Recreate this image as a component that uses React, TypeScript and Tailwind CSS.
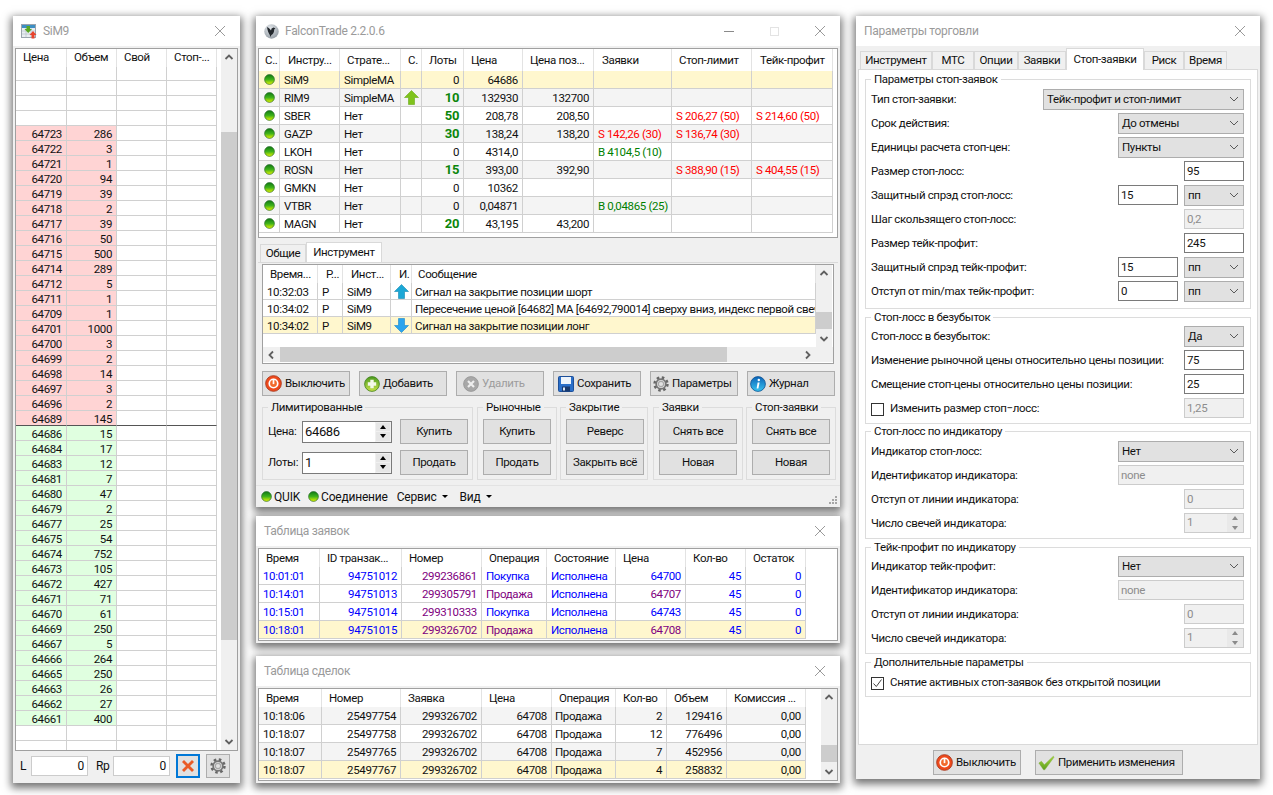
import type { ReactNode } from "react";

const asks: [string, string][] = [
  ["64723", "286"], ["64722", "3"], ["64721", "1"], ["64720", "94"], ["64719", "39"],
  ["64718", "2"], ["64717", "39"], ["64716", "50"], ["64715", "500"], ["64714", "289"],
  ["64712", "5"], ["64711", "1"], ["64709", "1"], ["64701", "1000"], ["64700", "3"],
  ["64699", "2"], ["64698", "14"], ["64697", "3"], ["64696", "2"], ["64689", "145"],
];
const bids: [string, string][] = [
  ["64686", "15"], ["64684", "17"], ["64683", "12"], ["64681", "7"], ["64680", "47"],
  ["64679", "2"], ["64677", "25"], ["64675", "54"], ["64674", "752"], ["64673", "105"],
  ["64672", "427"], ["64671", "71"], ["64670", "61"], ["64669", "250"], ["64667", "5"],
  ["64666", "264"], ["64665", "250"], ["64663", "26"], ["64662", "27"], ["64661", "400"],
];

const instruments = [
  { n: "SiM9", s: "SimpleMA", lots: "0", p: "64686", pos: "", o: "", sl: "", tp: "", bg: "bg-[#fff7ce]" },
  { n: "RIM9", s: "SimpleMA", arrow: true, lots: "10", p: "132930", pos: "132700", o: "", sl: "", tp: "", bg: "bg-[#f4f4f4]" },
  { n: "SBER", s: "Нет", lots: "50", p: "208,78", pos: "208,50", o: "", sl: "S 206,27 (50)", tp: "S 214,60 (50)", bg: "bg-white" },
  { n: "GAZP", s: "Нет", lots: "30", p: "138,24", pos: "138,20", o: "S 142,26 (30)", sl: "S 136,74 (30)", tp: "", bg: "bg-[#f4f4f4]" },
  { n: "LKOH", s: "Нет", lots: "0", p: "4314,0", pos: "", o: "B 4104,5 (10)", sl: "", tp: "", bg: "bg-white" },
  { n: "ROSN", s: "Нет", lots: "15", p: "393,00", pos: "392,90", o: "", sl: "S 388,90 (15)", tp: "S 404,55 (15)", bg: "bg-[#f4f4f4]" },
  { n: "GMKN", s: "Нет", lots: "0", p: "10362", pos: "", o: "", sl: "", tp: "", bg: "bg-white" },
  { n: "VTBR", s: "Нет", lots: "0", p: "0,04871", pos: "", o: "B 0,04865 (25)", sl: "", tp: "", bg: "bg-[#f4f4f4]" },
  { n: "MAGN", s: "Нет", lots: "20", p: "43,195", pos: "43,200", o: "", sl: "", tp: "", bg: "bg-white" },
];

const orders = [
  { t: "10:01:01", id: "94751012", num: "299236861", op: "Покупка", price: "64700", bg: "bg-white" },
  { t: "10:14:01", id: "94751013", num: "299305791", op: "Продажа", price: "64707", bg: "bg-white" },
  { t: "10:15:01", id: "94751014", num: "299310333", op: "Покупка", price: "64743", bg: "bg-white" },
  { t: "10:18:01", id: "94751015", num: "299326702", op: "Продажа", price: "64708", bg: "bg-[#fff7ce]" },
];

const deals = [
  { t: "10:18:06", num: "25497754", q: "2", v: "129416", bg: "bg-[#f4f4f4]" },
  { t: "10:18:07", num: "25497758", q: "12", v: "776496", bg: "bg-white" },
  { t: "10:18:07", num: "25497765", q: "7", v: "452956", bg: "bg-[#f4f4f4]" },
  { t: "10:18:07", num: "25497767", q: "4", v: "258832", bg: "bg-[#fff7ce]" },
];

const DOM_COLS = "grid-cols-[51px_50px_50px_50px]";
const INSTR_COLS = "grid-cols-[21px_60px_61px_21px_42px_59px_71px_78px_80px_81px]";
const LOG_COLS = "grid-cols-[55px_25px_48px_21px_404px]";
const ORDER_COLS = "grid-cols-[61px_82px_80px_65px_69px_70px_60px_60px]";
const DEAL_COLS = "grid-cols-[63px_79px_81px_70px_64px_51px_60px_79px]";

function Cell({ right, className = "", children }: { right?: boolean; className?: string; children?: ReactNode }) {
  return (
    <div
      className={`flex items-center overflow-hidden whitespace-nowrap border-r border-b border-[#d0d0d0] pt-[3px] ${
        right ? "justify-end pr-[4px]" : "pl-[4px]"
      } ${className}`}
    >
      {children}
    </div>
  );
}

function Head({ className = "pl-[7px]", children }: { className?: string; children?: ReactNode }) {
  return (
    <div className={`flex items-center overflow-hidden whitespace-nowrap border-r border-[#e3e3e3] pt-[2px] ${className}`}>
      {children}
    </div>
  );
}

function Chevron({ dir }: { dir: "up" | "down" | "left" | "right" }) {
  const d = {
    up: "M1.5 6 L5 2.5 L8.5 6",
    down: "M1.5 3 L5 6.5 L8.5 3",
    left: "M6 1.5 L2.5 5 L6 8.5",
    right: "M3 1.5 L6.5 5 L3 8.5",
  }[dir];
  return (
    <svg width="10" height="10" viewBox="0 0 10 10" fill="none">
      <path d={d} stroke="#606060" strokeWidth="1.8" />
    </svg>
  );
}

function VScroll({ thumb }: { thumb: string }) {
  return (
    <div className="flex w-[16px] shrink-0 flex-col bg-[#f0f0f0]">
      <div className="flex h-[17px] shrink-0 items-center justify-center">
        <Chevron dir="up" />
      </div>
      <div className={`shrink-0 bg-[#cdcdcd] ${thumb}`} />
      <div className="mt-auto flex h-[17px] shrink-0 items-center justify-center">
        <Chevron dir="down" />
      </div>
    </div>
  );
}

function Cross() {
  return (
    <svg width="10" height="10" viewBox="0 0 10 10" fill="none">
      <path d="M0 0 L10 10 M10 0 L0 10" stroke="#9a9a9a" strokeWidth="1" />
    </svg>
  );
}

function Led() {
  return (
    <svg width="11" height="11" viewBox="0 0 13 13" className="shrink-0">
      <defs>
        <linearGradient id="led" x1="0" y1="0" x2="0" y2="1">
          <stop offset="0" stopColor="#0f7a14" />
          <stop offset="0.5" stopColor="#3fb21a" />
          <stop offset="1" stopColor="#e6f600" />
        </linearGradient>
      </defs>
      <circle cx="6.5" cy="6.5" r="5.8" fill="url(#led)" stroke="#2b6b2b" strokeWidth="0.8" />
    </svg>
  );
}

function BigArrow({ color, dark, down }: { color: string; dark: string; down?: boolean }) {
  return (
    <svg width="15" height="15" viewBox="0 0 15 15" className={down ? "rotate-180" : ""}>
      <path d="M7.5 0.5 L14.5 7.5 H10.5 V14.5 H4.5 V7.5 H0.5 Z" fill={color} stroke={dark} strokeWidth="0.6" />
    </svg>
  );
}

function PowerIcon() {
  return (
    <svg width="17" height="17" viewBox="0 0 16 16" className="shrink-0">
      <circle cx="8" cy="8" r="7.4" fill="#ee4a1c" stroke="#a8341a" strokeWidth="0.8" />
      <circle cx="8" cy="8" r="4" fill="#f26a2c" stroke="#fff" strokeWidth="1.6" />
      <rect x="7.2" y="3.6" width="1.6" height="5" fill="#fff" />
    </svg>
  );
}

function PlusIcon() {
  return (
    <svg width="16" height="16" viewBox="0 0 16 16" className="shrink-0">
      <defs>
        <linearGradient id="plus" x1="0" y1="0" x2="0" y2="1">
          <stop offset="0" stopColor="#4a9a1e" />
          <stop offset="1" stopColor="#c8e24a" />
        </linearGradient>
      </defs>
      <circle cx="8" cy="8" r="7.4" fill="url(#plus)" stroke="#3f7f1c" strokeWidth="0.8" />
      <path d="M6.3 3.8 H9.7 V6.3 H12.2 V9.7 H9.7 V12.2 H6.3 V9.7 H3.8 V6.3 H6.3 Z" fill="#f4f8ea" />
    </svg>
  );
}

function DeleteIcon() {
  return (
    <svg width="16" height="16" viewBox="0 0 16 16" className="shrink-0">
      <circle cx="8" cy="8" r="7.4" fill="#a8a8a8" stroke="#949494" strokeWidth="0.8" />
      <path d="M5 5 L11 11 M11 5 L5 11" stroke="#eee" strokeWidth="2.2" />
    </svg>
  );
}

function FloppyIcon() {
  return (
    <svg width="16" height="16" viewBox="0 0 16 16" className="shrink-0">
      <rect x="0.5" y="0.5" width="15" height="15" rx="1" fill="#2a6fc9" stroke="#1d4f99" />
      <rect x="3" y="1" width="10" height="7" fill="#eef4fb" />
      <rect x="4" y="10.5" width="8" height="5" fill="#17396e" />
      <rect x="5" y="11.5" width="2" height="3" fill="#dbe6f5" />
    </svg>
  );
}

function GearIcon({ size = 16 }: { size?: number }) {
  return (
    <svg width={size} height={size} viewBox="0 0 16 16" fill="none" className="shrink-0">
      <circle cx="8" cy="8" r="6.4" stroke="#666666" strokeWidth="2.6" strokeDasharray="2.5 2.53" />
      <circle cx="8" cy="8" r="4.8" stroke="#757575" strokeWidth="1.8" />
      <circle cx="8" cy="8" r="2.6" stroke="#a8a8a8" strokeWidth="1.1" />
    </svg>
  );
}

function InfoIcon() {
  return (
    <svg width="16" height="16" viewBox="0 0 16 16" className="shrink-0">
      <defs>
        <linearGradient id="info" x1="0" y1="0" x2="0" y2="1">
          <stop offset="0" stopColor="#0c64b8" />
          <stop offset="1" stopColor="#38c4f0" />
        </linearGradient>
      </defs>
      <circle cx="8" cy="8" r="7.4" fill="url(#info)" stroke="#0d4f90" strokeWidth="0.8" />
      <circle cx="8.8" cy="4" r="1.2" fill="#fff" />
      <path d="M7.6 6.4 H9.6 L8.4 12.4 H6.6 Z" fill="#fff" />
    </svg>
  );
}

function CheckIcon() {
  return (
    <svg width="17" height="16" viewBox="0 0 20 18" className="shrink-0">
      <defs>
        <linearGradient id="chk" x1="0" y1="0" x2="0" y2="1">
          <stop offset="0" stopColor="#a4d83c" />
          <stop offset="1" stopColor="#5e9e1e" />
        </linearGradient>
      </defs>
      <path d="M1 9 L4 7 L7.5 11 L18 1 L19 2 L8 17 L6.5 17 Z" fill="url(#chk)" stroke="#7faa3a" strokeWidth="0.5" />
    </svg>
  );
}

function DomIcon() {
  return (
    <svg width="16" height="16" viewBox="0 0 16 16">
      <rect x="0.5" y="1.5" width="14" height="13" fill="#e9eef2" stroke="#9aa4ad" />
      <rect x="1" y="2" width="13" height="3" fill="#3d8fc4" />
      <path d="M1 8 H14 M1 11 H14 M5 5 V14 M10 5 V14" stroke="#b7c0c8" strokeWidth="0.7" />
      <path d="M5.5 3 H9 V6 H11 L7.2 10 L3.5 6 H5.5 Z" fill="#58a821" />
      <path d="M12 8 L15.5 12 H13.5 V15.5 H10.5 V12 H8.5 Z" fill="#e8432c" />
    </svg>
  );
}

function FalconIcon() {
  return (
    <svg width="15" height="15" viewBox="0 0 15 15">
      <defs>
        <radialGradient id="fal" cx="0.4" cy="0.3" r="0.8">
          <stop offset="0" stopColor="#e4e8ec" />
          <stop offset="1" stopColor="#8d969e" />
        </radialGradient>
      </defs>
      <circle cx="7.5" cy="7.5" r="7.2" fill="url(#fal)" />
      <path d="M3 3 C5 4 6 5 7 6.4 L7.6 4.4 L9.6 3.6 L11.4 4.6 L10.2 5.4 C10.4 8 9 10 7.4 11 L6.4 13 L5.8 11 C4.4 9 3.4 6 3 3 Z" fill="#23282d" />
    </svg>
  );
}

function Win({ pos, title, icon, controls, children }: { pos: string; title: string; icon?: ReactNode; controls?: boolean; children: ReactNode }) {
  return (
    <div className={`absolute flex flex-col bg-[#f0f0f0] shadow-[0_3px_8px_2px_rgba(0,0,0,0.55)] ${pos}`}>
      <div className="flex h-[30px] shrink-0 items-center bg-white pl-[8px] pr-[15px] text-[12px] tracking-[-0.3px] text-[#9a9a9a]">
        {icon && <span className="mr-[6px] flex">{icon}</span>}
        <span>{title}</span>
        <div className="ml-auto flex items-center gap-[36px]">
          {controls && (
            <>
              <span className="h-px w-[10px] bg-[#8a8a8a]" />
              <span className="h-[9px] w-[9px] border border-[#e3e3e3]" />
            </>
          )}
          <Cross />
        </div>
      </div>
      {children}
    </div>
  );
}

function Btn({ w = "w-[88px]", h = "h-[25px]", pad, icon, disabled, children }: { w?: string; h?: string; pad?: string; icon?: ReactNode; disabled?: boolean; children?: ReactNode }) {
  return (
    <div
      className={`flex shrink-0 items-center gap-[3px] border border-[#adadad] bg-[#e1e1e1] ${
        pad ? `justify-start ${pad}` : "justify-center"
      } ${w} ${h} ${disabled ? "text-[#9d9d9d]" : ""}`}
    >
      {icon}
      {children}
    </div>
  );
}

function Group({ title, className, body = "", children }: { title: string; className: string; body?: string; children: ReactNode }) {
  return (
    <fieldset className={`min-w-0 border border-[#dcdcdc] ${className}`}>
      <legend className="ml-[5px] px-[3px] leading-[14px]">{title}</legend>
      <div className={body}>{children}</div>
    </fieldset>
  );
}

function Spin({ value }: { value: string }) {
  return (
    <div className="flex h-[22px] w-[90px] items-center border border-[#7a7a7a] bg-white pl-[2px] text-[13px]">
      <span>{value}</span>
      <div className="ml-auto flex h-full w-[16px] flex-col justify-center gap-[1px] bg-[#f0f0f0] px-[1px] py-[1px]">
        <div className="flex flex-1 items-center justify-center bg-[#e6e6e6]">
          <span className="h-0 w-0 border-x-[3px] border-b-[4px] border-x-transparent border-b-black" />
        </div>
        <div className="flex flex-1 items-center justify-center bg-[#e6e6e6]">
          <span className="h-0 w-0 border-x-[3px] border-t-[4px] border-x-transparent border-t-black" />
        </div>
      </div>
    </div>
  );
}

function Combo({ w, children }: { w: string; children: ReactNode }) {
  return (
    <div className={`flex h-[21px] items-center justify-between border border-[#adadad] bg-[#e1e1e1] pl-[3px] pr-[4px] ${w}`}>
      <span className="pt-px">{children}</span>
      <svg width="10" height="6" viewBox="0 0 10 6" fill="none">
        <path d="M1 1 L5 5 L9 1" stroke="#5a5a5a" strokeWidth="1" />
      </svg>
    </div>
  );
}

function Field({ w = "w-[60px]", disabled, children }: { w?: string; disabled?: boolean; children: ReactNode }) {
  return (
    <div
      className={`flex h-[20px] items-center border pl-[2px] pt-px ${w} ${
        disabled ? "border-[#cccccc] bg-[#f0f0f0] text-[#8d8d8d]" : "border-[#7a7a7a] bg-white"
      }`}
    >
      {children}
    </div>
  );
}

function Row({ label, children }: { label: ReactNode; children?: ReactNode }) {
  return (
    <div className="flex h-[24px] items-center justify-between">
      <div className="flex items-center whitespace-nowrap pt-[2px]">{label}</div>
      <div className="flex items-center gap-[6px]">{children}</div>
    </div>
  );
}

function DisabledSpin() {
  return (
    <div className="flex h-[20px] w-[60px] items-center border border-[#cccccc] bg-[#f0f0f0] pl-[2px] text-[#8d8d8d]">
      <span>1</span>
      <div className="ml-auto flex h-full w-[16px] flex-col justify-center gap-[1px] bg-[#e9e9e9]">
        <div className="flex flex-1 items-center justify-center">
          <span className="h-0 w-0 border-x-[3px] border-b-[4px] border-x-transparent border-b-[#8a8a8a]" />
        </div>
        <div className="flex flex-1 items-center justify-center">
          <span className="h-0 w-0 border-x-[3px] border-t-[4px] border-x-transparent border-t-[#8a8a8a]" />
        </div>
      </div>
    </div>
  );
}

function Box({ checked }: { checked?: boolean }) {
  return (
    <span className="mr-[6px] flex h-[13px] w-[13px] items-center justify-center border border-[#333333] bg-white">
      {checked && (
        <svg width="11" height="11" viewBox="0 0 11 11" fill="none">
          <path d="M1.5 5.5 L4.3 8.5 L9.5 1.5" stroke="#444" strokeWidth="1" />
        </svg>
      )}
    </span>
  );
}

function DomWindow() {
  return (
    <Win pos="left-[13px] top-[16px] h-[767px] w-[227px]" title="SiM9" icon={<DomIcon />}>
      <div className="mx-[2px] mt-[2px] flex h-[703px] overflow-hidden border border-[#a0a0a0] bg-white">
        <div className="w-[205px] shrink-0 overflow-hidden">
          <div className={`grid h-[18px] ${DOM_COLS}`}>
            <Head className="pl-[7px] !pt-0">Цена</Head>
            <Head className="pl-[7px] !pt-0">Объем</Head>
            <Head className="pl-[7px] !pt-0">Свой</Head>
            <Head className="pl-[7px] !pt-0">Стоп-...</Head>
          </div>
          {["h-[14px]", "h-[15px]", "h-[15px]", "h-[15px]"].map((h, i) => (
            <div key={i} className={`grid ${DOM_COLS} ${h}`}>
              <Cell /><Cell /><Cell /><Cell />
            </div>
          ))}
          {asks.map(([p, v], i) => (
            <div key={p} className={`grid h-[15px] ${DOM_COLS}`}>
              <Cell right className={`bg-[#ffd4d4] !pt-[4px] ${i === 19 ? "border-b-[#555555]" : ""}`}>{p}</Cell>
              <Cell right className={`bg-[#ffd4d4] !pt-[4px] ${i === 19 ? "border-b-[#555555]" : ""}`}>{v}</Cell>
              <Cell className={i === 19 ? "border-b-[#555555]" : ""} />
              <Cell className={i === 19 ? "border-b-[#555555]" : ""} />
            </div>
          ))}
          {bids.map(([p, v]) => (
            <div key={p} className={`grid h-[15px] ${DOM_COLS}`}>
              <Cell right className="bg-[#e0ffe0] !pt-[4px]">{p}</Cell>
              <Cell right className="bg-[#e0ffe0] !pt-[4px]">{v}</Cell>
              <Cell />
              <Cell />
            </div>
          ))}
          {[0, 1].map((i) => (
            <div key={i} className={`grid h-[15px] ${DOM_COLS}`}>
              <Cell /><Cell /><Cell /><Cell />
            </div>
          ))}
        </div>
        <VScroll thumb="mt-[66px] h-[508px]" />
      </div>
      <div className="mt-[3px] flex items-center pl-[7px] text-[12px]">
        <span className="w-[11px]">L</span>
        <div className="flex h-[20px] w-[57px] items-center justify-end border border-[#cccccc] bg-white pr-[3px]">0</div>
        <span className="ml-[8px] w-[17px]">Rp</span>
        <div className="flex h-[20px] w-[57px] items-center justify-end border border-[#cccccc] bg-white pr-[3px]">0</div>
        <div className="ml-[6px] flex h-[24px] w-[24px] items-center justify-center border-2 border-[#0078d7] bg-[#e1e1e1]">
          <svg width="14" height="14" viewBox="0 0 14 14">
            <path d="M1 3 L3 1 L7 5 L11 1 L13 3 L9 7 L13 11 L11 13 L7 9 L3 13 L1 11 L5 7 Z" fill="#ea5b26" />
          </svg>
        </div>
        <div className="ml-[6px] flex h-[24px] w-[24px] items-center justify-center border border-[#adadad] bg-[#e1e1e1]">
          <GearIcon />
        </div>
      </div>
    </Win>
  );
}

function MainWindow() {
  return (
    <Win pos="left-[256px] top-[16px] h-[491px] w-[584px]" title="FalconTrade 2.2.0.6" icon={<FalconIcon />} controls>
      <div className="mx-[2px] mt-[2px] flex h-[190px] shrink-0 flex-col overflow-hidden border border-[#a0a0a0] bg-white">
        <div className={`grid h-[22px] shrink-0 ${INSTR_COLS}`}>
          <Head className="pl-[6px]">С..</Head>
          <Head className="pl-[8px]">Инстру...</Head>
          <Head>Страте...</Head>
          <Head>С.</Head>
          <Head>Лоты</Head>
          <Head>Цена</Head>
          <Head>Цена поз...</Head>
          <Head className="pl-[8px]">Заявки</Head>
          <Head>Стоп-лимит</Head>
          <Head className="pl-[8px]">Тейк-профит</Head>
        </div>
        {instruments.map((r) => (
          <div key={r.n} className={`grid h-[18px] shrink-0 ${INSTR_COLS}`}>
            <Cell className={`justify-center !pl-0 !pt-0 ${r.bg}`}><Led /></Cell>
            <Cell className={r.bg}>{r.n}</Cell>
            <Cell className={r.bg}>{r.s}</Cell>
            <Cell className={`justify-center !pl-0 !pt-0 ${r.bg}`}>
              {r.arrow && <BigArrow color="#7fc31c" dark="#6aa818" />}
            </Cell>
            <Cell right className={`${r.bg} ${r.lots !== "0" ? "!pt-0 text-[13px] font-bold text-[#0b860b]" : ""}`}>{r.lots}</Cell>
            <Cell right className={r.bg}>{r.p}</Cell>
            <Cell right className={r.bg}>{r.pos}</Cell>
            <Cell className={`${r.bg} ${r.o.startsWith("B") ? "text-[#008000]" : "text-[#ff0000]"}`}>{r.o}</Cell>
            <Cell className={`${r.bg} text-[#ff0000]`}>{r.sl}</Cell>
            <Cell className={`${r.bg} text-[#ff0000]`}>{r.tp}</Cell>
          </div>
        ))}
      </div>

      <div className="ml-[4px] mt-[4px] flex h-[20px] shrink-0 items-end">
        <div className="flex h-[18px] w-[46px] items-center justify-center border border-b-0 border-[#d9d9d9]">Общие</div>
        <div className="flex h-[20px] w-[76px] items-center justify-center border border-b-0 border-[#d9d9d9] bg-white">Инструмент</div>
      </div>
      <div className="mx-[2px] border-t border-[#d9d9d9] px-[4px] pt-[1px]">
        <div className="flex h-[100px] flex-col overflow-hidden border border-[#a0a0a0] bg-white">
          <div className="flex h-[82px] shrink-0">
            <div className="w-[553px] shrink-0 overflow-hidden">
              <div className={`grid h-[18px] ${LOG_COLS}`}>
                <Head>Время...</Head>
                <Head className="pl-[8px]">Р...</Head>
                <Head className="pl-[8px]">Инст...</Head>
                <Head className="pl-[8px]">И.</Head>
                <Head className="pl-[6px]">Сообщение</Head>
              </div>
              <div className={`grid h-[17px] ${LOG_COLS}`}>
                <Cell>10:32:03</Cell>
                <Cell>P</Cell>
                <Cell>SiM9</Cell>
                <Cell className="justify-center !pl-0 !pt-0"><BigArrow color="#1ba7d6" dark="#1588b0" /></Cell>
                <Cell className="!pl-[3px]">Сигнал на закрытие позиции шорт</Cell>
              </div>
              <div className={`grid h-[17px] ${LOG_COLS}`}>
                <Cell>10:34:02</Cell>
                <Cell>P</Cell>
                <Cell>SiM9</Cell>
                <Cell />
                <Cell className="!pl-[3px]">Пересечение ценой [64682] MA [64692,790014] сверху вниз, индекс первой свечи</Cell>
              </div>
              <div className={`grid h-[17px] bg-[#fff7ce] ${LOG_COLS}`}>
                <Cell>10:34:02</Cell>
                <Cell>P</Cell>
                <Cell>SiM9</Cell>
                <Cell className="justify-center !pl-0 !pt-0"><BigArrow color="#2ba4ee" dark="#1c86c8" down /></Cell>
                <Cell className="!pl-[3px]">Сигнал на закрытие позиции лонг</Cell>
              </div>
            </div>
            <VScroll thumb="mt-[30px] h-[17px]" />
          </div>
          <div className="flex h-[15px] shrink-0 items-center bg-[#f0f0f0]">
            <div className="flex w-[17px] justify-center"><Chevron dir="left" /></div>
            <div className="h-full w-[447px] bg-[#cdcdcd]" />
            <div className="ml-[72px] flex w-[17px] justify-center"><Chevron dir="right" /></div>
          </div>
        </div>
      </div>

      <div className="ml-[6px] mt-[7px] flex shrink-0 gap-[9px]">
        <Btn pad="pl-[2px]" icon={<PowerIcon />}>Выключить</Btn>
        <Btn pad="pl-[4px]" icon={<PlusIcon />}>Добавить</Btn>
        <Btn pad="pl-[6px]" icon={<DeleteIcon />} disabled>Удалить</Btn>
        <Btn pad="pl-[4px]" icon={<FloppyIcon />}>Сохранить</Btn>
        <Btn pad="pl-[2px]" icon={<GearIcon />}>Параметры</Btn>
        <Btn pad="pl-[2px]" icon={<InfoIcon />}>Журнал</Btn>
      </div>

      <div className="ml-[6px] mt-[4px] flex h-[80px] shrink-0">
        <Group title="Лимитированные" className="h-[80px] w-[211px] shrink-0">
          <div className="grid grid-cols-[26px_90px_68px] items-center gap-x-[8px] gap-y-[6px] pl-[5px] pt-[5px]">
            <span>Цена:</span>
            <Spin value="64686" />
            <Btn w="w-[68px]">Купить</Btn>
            <span>Лоты:</span>
            <Spin value="1" />
            <Btn w="w-[68px]">Продать</Btn>
          </div>
        </Group>
        <Group title="Рыночные" className="ml-[4px] h-[80px] w-[80px] shrink-0">
          <div className="flex flex-col gap-[6px] pl-[5px] pt-[5px]">
            <Btn w="w-[68px]">Купить</Btn>
            <Btn w="w-[68px]">Продать</Btn>
          </div>
        </Group>
        <Group title="Закрытие" className="ml-[3px] h-[80px] w-[88px] shrink-0">
          <div className="flex flex-col gap-[6px] pl-[5px] pt-[5px]">
            <Btn w="w-[78px]">Реверс</Btn>
            <Btn w="w-[78px]">Закрыть всё</Btn>
          </div>
        </Group>
        <Group title="Заявки" className="ml-[5px] h-[80px] w-[90px] shrink-0">
          <div className="flex flex-col gap-[6px] pl-[5px] pt-[5px]">
            <Btn w="w-[78px]">Снять все</Btn>
            <Btn w="w-[78px]">Новая</Btn>
          </div>
        </Group>
        <Group title="Стоп-заявки" className="ml-[3px] h-[80px] w-[90px] shrink-0">
          <div className="flex flex-col gap-[6px] pl-[5px] pt-[5px]">
            <Btn w="w-[78px]">Снять все</Btn>
            <Btn w="w-[78px]">Новая</Btn>
          </div>
        </Group>
      </div>

      <div className="relative mt-[5px] flex flex-1 items-center border-t border-[#e3e3e3] pl-[5px] text-[12px] tracking-[-0.2px]">
        <Led />
        <span className="ml-[2px]">QUIK</span>
        <span className="ml-[8px] flex"><Led /></span>
        <span className="ml-[2px]">Соединение</span>
        <span className="ml-[9px]">Сервис</span>
        <span className="ml-[5px] h-0 w-0 border-x-[3px] border-t-[3px] border-x-transparent border-t-black" />
        <span className="ml-[12px]">Вид</span>
        <span className="ml-[5px] h-0 w-0 border-x-[3px] border-t-[3px] border-x-transparent border-t-black" />
        <svg className="absolute bottom-[2px] right-[2px]" width="10" height="10" viewBox="0 0 10 10" fill="#a6a6a6">
          <rect x="7" y="1" width="2" height="2" />
          <rect x="4" y="4" width="2" height="2" />
          <rect x="7" y="4" width="2" height="2" />
          <rect x="1" y="7" width="2" height="2" />
          <rect x="4" y="7" width="2" height="2" />
          <rect x="7" y="7" width="2" height="2" />
        </svg>
      </div>
    </Win>
  );
}

function OrdersWindow() {
  return (
    <Win pos="left-[256px] top-[516px] h-[127px] w-[584px]" title="Таблица заявок">
      <div className="mx-[2px] mt-[2px] h-[93px] overflow-hidden border border-[#a0a0a0] bg-white">
        <div className={`grid h-[18px] ${ORDER_COLS}`}>
          <Head>Время</Head>
          <Head>ID транзак...</Head>
          <Head>Номер</Head>
          <Head>Операция</Head>
          <Head>Состояние</Head>
          <Head>Цена</Head>
          <Head>Кол-во</Head>
          <Head>Остаток</Head>
        </div>
        {orders.map((r) => {
          const c = r.op === "Покупка" ? "text-[#0000ff]" : "text-[#800080]";
          return (
            <div key={r.id} className={`grid h-[18px] w-[547px] text-[#0000ff] ${ORDER_COLS} ${r.bg}`}>
              <Cell>{r.t}</Cell>
              <Cell right>{r.id}</Cell>
              <Cell right className="text-[#800080]">{r.num}</Cell>
              <Cell className={c}>{r.op}</Cell>
              <Cell>Исполнена</Cell>
              <Cell right className={c}>{r.price}</Cell>
              <Cell right>45</Cell>
              <Cell right>0</Cell>
            </div>
          );
        })}
      </div>
    </Win>
  );
}

function DealsWindow() {
  return (
    <Win pos="left-[256px] top-[656px] h-[127px] w-[584px]" title="Таблица сделок">
      <div className="mx-[2px] mt-[2px] flex h-[93px] overflow-hidden border border-[#a0a0a0] bg-white">
        <div className="w-[562px] shrink-0">
          <div className={`grid h-[18px] w-[547px] ${DEAL_COLS}`}>
            <Head>Время</Head>
            <Head>Номер</Head>
            <Head>Заявка</Head>
            <Head>Цена</Head>
            <Head>Операция</Head>
            <Head>Кол-во</Head>
            <Head>Объем</Head>
            <Head>Комиссия ...</Head>
          </div>
          {deals.map((r) => (
            <div key={r.num} className={`grid h-[18px] w-[547px] ${DEAL_COLS} ${r.bg}`}>
              <Cell>{r.t}</Cell>
              <Cell right>{r.num}</Cell>
              <Cell right>299326702</Cell>
              <Cell right>64708</Cell>
              <Cell className="!pl-[3px]">Продажа</Cell>
              <Cell right>{r.q}</Cell>
              <Cell right>{r.v}</Cell>
              <Cell right>0,00</Cell>
            </div>
          ))}
        </div>
        <VScroll thumb="mt-[39px] h-[17px]" />
      </div>
    </Win>
  );
}

const settingsTabs = ["Инструмент", "МТС", "Опции", "Заявки", "Стоп-заявки", "Риск", "Время"];
const tabWidths = ["w-[72px]", "w-[42px]", "w-[44px]", "w-[48px]", "w-[78px]", "w-[40px]", "w-[43px]"];

function SettingsWindow() {
  return (
    <Win pos="left-[856px] top-[16px] h-[763px] w-[404px]" title="Параметры торговли">
      <div className="ml-[4px] mt-[2px] flex h-[21px] shrink-0 items-end">
        {settingsTabs.map((t, i) => (
          <div
            key={t}
            className={`flex items-center justify-center border border-[#d9d9d9] ${tabWidths[i]} ${
              t === "Стоп-заявки" ? "relative -mb-px h-[22px] border-b-0 bg-white" : "h-[18px] border-b-0"
            }`}
          >
            {t}
          </div>
        ))}
      </div>
      <div className="mx-[2px] flex h-[676px] shrink-0 flex-col border border-[#d9d9d9] bg-white px-[6px] pt-[2px]">
        <Group title="Параметры стоп-заявок" className="h-[237px] shrink-0" body="pl-[5px] pr-[6px] pt-px">
          <Row label="Тип стоп-заявки:"><Combo w="w-[201px]">Тейк-профит и стоп-лимит</Combo></Row>
          <Row label="Срок действия:"><Combo w="w-[126px]">До отмены</Combo></Row>
          <Row label="Единицы расчета стоп-цен:"><Combo w="w-[126px]">Пункты</Combo></Row>
          <Row label="Размер стоп-лосс:"><Field>95</Field></Row>
          <Row label="Защитный спрэд стоп-лосс:"><Field>15</Field><Combo w="w-[60px]">пп</Combo></Row>
          <Row label="Шаг скользящего стоп-лосс:"><Field disabled>0,2</Field></Row>
          <Row label="Размер тейк-профит:"><Field>245</Field></Row>
          <Row label="Защитный спрэд тейк-профит:"><Field>15</Field><Combo w="w-[60px]">пп</Combo></Row>
          <Row label="Отступ от min/max тейк-профит:"><Field>0</Field><Combo w="w-[60px]">пп</Combo></Row>
        </Group>
        <Group title="Стоп-лосс в безубыток" className="mt-px h-[114px] shrink-0" body="pl-[5px] pr-[6px]">
          <Row label="Стоп-лосс в безубыток:"><Combo w="w-[60px]">Да</Combo></Row>
          <Row label="Изменение рыночной цены относительно цены позиции:"><Field>75</Field></Row>
          <Row label="Смещение стоп-цены относительно цены позиции:"><Field>25</Field></Row>
          <Row label={<><Box />Изменить размер стоп−лосс:</>}><Field disabled>1,25</Field></Row>
        </Group>
        <Group title="Стоп-лосс по индикатору" className="h-[115px] shrink-0" body="pl-[5px] pr-[6px] pt-px">
          <Row label="Индикатор стоп-лосс:"><Combo w="w-[126px]">Нет</Combo></Row>
          <Row label="Идентификатор индикатора:"><Field w="w-[126px]" disabled>none</Field></Row>
          <Row label="Отступ от линии индикатора:"><Field disabled>0</Field></Row>
          <Row label="Число свечей индикатора:"><DisabledSpin /></Row>
        </Group>
        <Group title="Тейк-профит по индикатору" className="mt-px h-[114px] shrink-0" body="pl-[5px] pr-[6px]">
          <Row label="Индикатор тейк-профит:"><Combo w="w-[126px]">Нет</Combo></Row>
          <Row label="Идентификатор индикатора:"><Field w="w-[126px]" disabled>none</Field></Row>
          <Row label="Отступ от линии индикатора:"><Field disabled>0</Field></Row>
          <Row label="Число свечей индикатора:"><DisabledSpin /></Row>
        </Group>
        <Group title="Дополнительные параметры" className="mt-px h-[42px] shrink-0" body="pl-[5px] pr-[6px] pt-px">
          <Row label={<><Box checked />Снятие активных стоп-заявок без открытой позиции</>} />
        </Group>
      </div>
      <div className="ml-[77px] mt-[5px] flex gap-[14px]">
        <Btn pad="pl-[2px]" icon={<PowerIcon />}>Выключить</Btn>
        <Btn pad="pl-[2px]" w="w-[148px]" icon={<CheckIcon />}>Применить изменения</Btn>
      </div>
    </Win>
  );
}

export default function App() {
  return (
    <div className="relative h-[795px] w-[1273px] overflow-hidden bg-white font-[Roboto,'Liberation_Sans',sans-serif] text-[11.5px] leading-none tracking-[-0.35px] text-[#111]">
      <DomWindow />
      <MainWindow />
      <OrdersWindow />
      <DealsWindow />
      <SettingsWindow />
    </div>
  );
}
